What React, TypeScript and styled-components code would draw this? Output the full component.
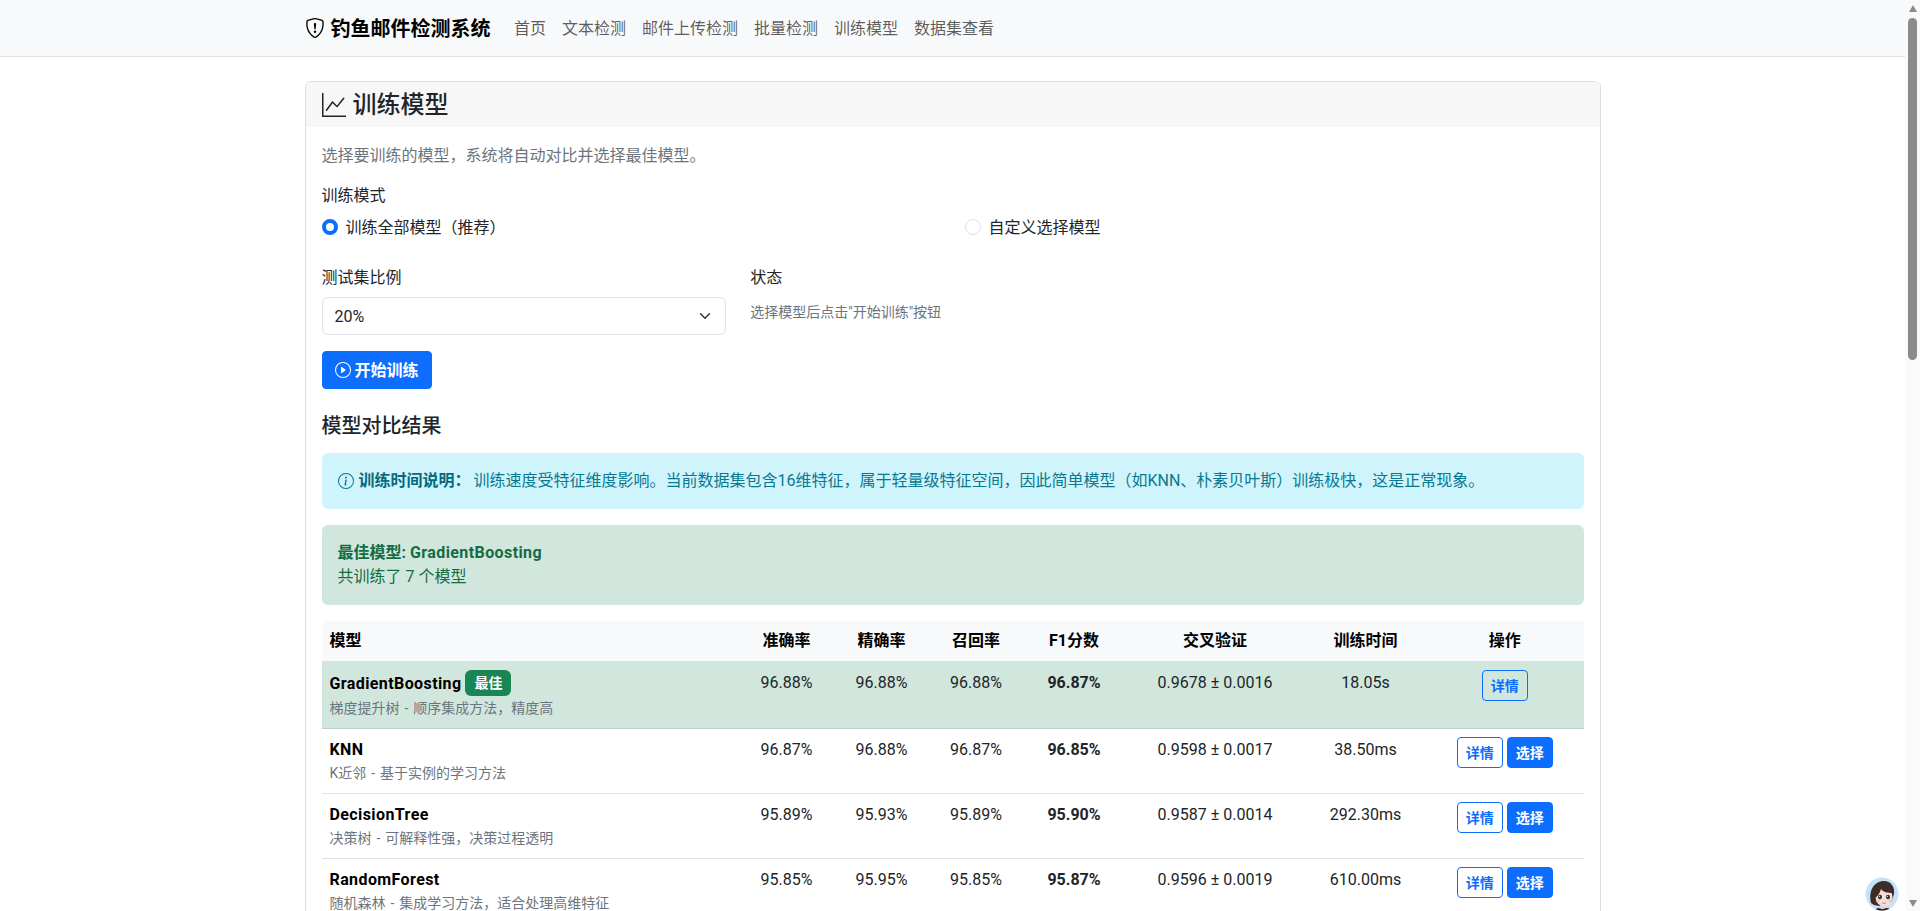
import React from "react";
import styled, { createGlobalStyle, css } from "styled-components";
import { BsShieldExclamation, BsGraphUp, BsPlayCircle, BsInfoCircle } from "react-icons/bs";

const GlobalStyle = createGlobalStyle`
  * { box-sizing: border-box; }
  html, body { margin: 0; padding: 0; height: 100%; overflow: hidden; }
  body {
    font-family: Roboto, "Noto Sans CJK SC", "Noto Sans", sans-serif;
    font-size: 16px;
    line-height: 24px;
    color: #212529;
    background: #fff;
  }
`;

/* CJK text sits one pixel lower in its 24px line box in the reference */
const loweredLine = css`
  display: block;
  height: 24px;
  line-height: 26px;
`;

const Shell = styled.div`
  display: flex;
  height: 911px;
  overflow: hidden;
`;
const Viewport = styled.div`
  position: relative;
  flex: 1;
  min-width: 0;
  overflow: hidden;
`;
const ScrollRail = styled.div`
  width: 15px;
  flex: none;
  background: #fafafa;
  display: flex;
  flex-direction: column;
  align-items: center;
  padding-top: 5px;
`;
const ArrowUp = styled.div`
  width: 0;
  height: 0;
  border-left: 4.5px solid transparent;
  border-right: 4.5px solid transparent;
  border-bottom: 7px solid #8b8b8b;
`;
const ArrowDown = styled.div`
  width: 0;
  height: 0;
  margin-top: 540px;
  border-left: 4.5px solid transparent;
  border-right: 4.5px solid transparent;
  border-top: 7px solid #8b8b8b;
`;
const Thumb = styled.div`
  width: 9px;
  height: 342px;
  margin-top: 6px;
  border-radius: 4.5px;
  background: #8b8b8b;
`;

const NavBar = styled.nav`
  height: 57px;
  background: #f8f9fa;
  border-bottom: 1px solid #dee2e6;
`;
const NavInner = styled.div`
  width: 1296px;
  margin: 0 auto;
  height: 56px;
  display: flex;
  align-items: center;
`;
const Brand = styled.div`
  display: flex;
  align-items: center;
  gap: 6px;
  font-size: 20px;
  font-weight: 700;
  color: #000;
  margin-right: 15.5px;
`;
const BrandText = styled.span`
  display: block;
  height: 28px;
  line-height: 30px;
`;
const NavLink = styled.a`
  ${loweredLine}
  padding: 0 8px;
  color: rgba(0, 0, 0, 0.65);
  white-space: nowrap;
`;

const Container = styled.main`
  width: 1296px;
  margin: 24px auto 0;
`;
const Card = styled.section`
  border: 1px solid rgba(0, 0, 0, 0.125);
  border-radius: 6px;
  overflow: hidden;
`;
const CardHeader = styled.header`
  height: 45px;
  padding: 0 16px;
  background: #f7f7f7;
  display: flex;
  align-items: center;
  gap: 7px;
  font-size: 24px;
  font-weight: 500;
`;
const CardTitle = styled.span`
  display: block;
  height: 29px;
  line-height: 31px;
`;
const CardBody = styled.div`
  padding: 16px;
`;
const Lead = styled.p`
  ${loweredLine}
  margin: 0 0 16px;
  color: #6c757d;
`;
const FieldLabel = styled.div`
  ${loweredLine}
  margin-bottom: 8px;
`;
const ModeRow = styled.div`
  display: grid;
  grid-template-columns: 643px 1fr;
  margin-bottom: 26px;
`;
const RadioItem = styled.label`
  display: flex;
  align-items: center;
  gap: 8px;
`;
const RadioText = styled.span`
  ${loweredLine}
`;
const RadioMark = styled.span<{ $on?: boolean }>`
  width: 16px;
  height: 16px;
  border-radius: 50%;
  flex: none;
  border: ${(p) => (p.$on ? "4px solid #0d6efd" : "1px solid #dee2e6")};
  background: #fff;
`;
const SettingsRow = styled.div`
  display: grid;
  grid-template-columns: 404.67px 1fr;
  column-gap: 24px;
  margin-bottom: 16px;
`;
const SelectBox = styled.select`
  display: block;
  width: 100%;
  height: 38px;
  padding: 7px 36px 5px 12px;
  appearance: none;
  font: inherit;
  color: #212529;
  background: #fff url("data:image/svg+xml,%3csvg xmlns='http://www.w3.org/2000/svg' viewBox='0 0 16 16'%3e%3cpath fill='none' stroke='%23343a40' stroke-linecap='round' stroke-linejoin='round' stroke-width='2' d='m2 5 6 6 6-6'/%3e%3c/svg%3e") no-repeat right 12px center / 16px 12px;
  border: 1px solid #dee2e6;
  border-radius: 6px;
`;
const StatusText = styled.div`
  font-size: 14px;
  line-height: 21px;
  color: #6c757d;
  padding-top: 5px;
`;
const PrimaryButton = styled.button`
  display: flex;
  align-items: center;
  gap: 4px;
  height: 38px;
  padding: 0 12px;
  border: 1px solid #0d6efd;
  border-radius: 4px;
  background: #0d6efd;
  color: #fff;
  font: inherit;
  font-weight: 700;
`;
const ButtonLabel = styled.span`
  ${loweredLine}
`;
const SectionTitle = styled.h5`
  margin: 25px 0 15px;
  font-size: 20px;
  line-height: 24px;
  font-weight: 500;
`;
const Alert = styled.div<{ $tone: "info" | "success" }>`
  margin-bottom: 16px;
  padding: 16px;
  border-radius: 6px;
  background: ${(p) => (p.$tone === "info" ? "#cff4fc" : "#d1e7dd")};
  color: ${(p) => (p.$tone === "info" ? "#087990" : "#146c43")};
`;
const AlertLine = styled.div`
  display: flex;
  align-items: center;
  white-space: pre;
`;
const InfoIcon = styled(BsInfoCircle)`
  margin-right: 5px;
`;
const AlertLead = styled.strong`
  margin-right: 3px;
  color: #06697e;
`;
const LatinBold = styled.span`
  letter-spacing: 0.4px;
`;

const Table = styled.table`
  width: 100%;
  border-collapse: collapse;
  table-layout: fixed;
`;
const HeadCell = styled.th<{ $left?: boolean }>`
  height: 40px;
  padding: 8px;
  background: #f8f9fa;
  color: #000;
  font-weight: 700;
  text-align: ${(p) => (p.$left ? "left" : "center")};
  border-bottom: 1px solid #d1e7dd;
`;
const Row = styled.tr<{ $best?: boolean }>`
  background: ${(p) => (p.$best ? "#d1e7dd" : "#fff")};
  border-bottom: 1px solid ${(p) => (p.$best ? "#bdd0c7" : "#dee2e6")};
`;
const Cell = styled.td<{ $strong?: boolean }>`
  padding: 9px 8px 7px;
  vertical-align: top;
  text-align: center;
  font-weight: ${(p) => (p.$strong ? 700 : 400)};
`;
const ActionCell = styled.td`
  padding: 8px;
  vertical-align: top;
`;
const ModelCell = styled.td`
  padding: 8px;
  vertical-align: top;
`;
const ModelName = styled.div`
  display: flex;
  align-items: center;
  gap: 4px;
  font-weight: 700;
  color: #000;
`;
const NameText = styled.span`
  ${loweredLine}
  letter-spacing: 0.4px;
`;
const Badge = styled.span`
  height: 26px;
  padding: 0 9px;
  border-radius: 6px;
  background: #198754;
  color: #fff;
  font-size: 14px;
  line-height: 26px;
  font-weight: 700;
`;
const ModelDesc = styled.div`
  font-size: 14px;
  line-height: 24px;
  word-spacing: 1.5px;
  color: #6c757d;
`;
const Actions = styled.div`
  display: flex;
  justify-content: center;
  gap: 4px;
`;
const SmallButton = styled.button<{ $solid?: boolean }>`
  width: 46px;
  height: 31px;
  padding: 0;
  border: 1px solid #0d6efd;
  border-radius: 4px;
  background: ${(p) => (p.$solid ? "#0d6efd" : "transparent")};
  color: ${(p) => (p.$solid ? "#fff" : "#0d6efd")};
  font: inherit;
  font-size: 14px;
  font-weight: 700;
`;
const AvatarBadge = styled.div`
  position: absolute;
  right: 5px;
  bottom: -1px;
  width: 36px;
  height: 36px;
`;

const columnWidths = [417.5, 95, 95, 94, 102, 180, 121, 157.5];
const headers = ["模型", "准确率", "精确率", "召回率", "F1分数", "交叉验证", "训练时间", "操作"];
const links = ["首页", "文本检测", "邮件上传检测", "批量检测", "训练模型", "数据集查看"];

const rows = [
  { name: "GradientBoosting", desc: "梯度提升树 - 顺序集成方法，精度高", acc: "96.88%", pre: "96.88%", rec: "96.88%", f1: "96.87%", cv: "0.9678 ± 0.0016", time: "18.05s", best: true },
  { name: "KNN", desc: "K近邻 - 基于实例的学习方法", acc: "96.87%", pre: "96.88%", rec: "96.87%", f1: "96.85%", cv: "0.9598 ± 0.0017", time: "38.50ms" },
  { name: "DecisionTree", desc: "决策树 - 可解释性强，决策过程透明", acc: "95.89%", pre: "95.93%", rec: "95.89%", f1: "95.90%", cv: "0.9587 ± 0.0014", time: "292.30ms" },
  { name: "RandomForest", desc: "随机森林 - 集成学习方法，适合处理高维特征", acc: "95.85%", pre: "95.95%", rec: "95.85%", f1: "95.87%", cv: "0.9596 ± 0.0019", time: "610.00ms" },
];

function Avatar() {
  return (
    <svg width="36" height="36" viewBox="0 0 36 36">
      <defs>
        <clipPath id="avatarClip"><circle cx="18" cy="18" r="16.5" /></clipPath>
      </defs>
      <circle cx="18" cy="18" r="18" fill="#fff" />
      <g clipPath="url(#avatarClip)">
        <rect width="36" height="36" fill="#c5e2fc" />
        <path d="M7 27C4 15 10 5 20 5c7 0 11 6 10 13l-2 6-13 6-5-1z" fill="#3f2c26" />
        <path d="M14 31h9v5h-9z" fill="#eec8bd" />
        <ellipse cx="20" cy="21" rx="8.5" ry="9.5" fill="#f5dcd4" />
        <path d="M11 22c0-9 4-13 10-13 5 0 8 3 8 8-6 0-10-1-12-4-1 4-3 7-6 9z" fill="#3f2c26" />
        <ellipse cx="16" cy="21" rx="2" ry="2.3" fill="#2f2f33" />
        <ellipse cx="24" cy="21" rx="2" ry="2.3" fill="#2f2f33" />
        <circle cx="15.5" cy="20.3" r="0.6" fill="#fff" />
        <circle cx="23.5" cy="20.3" r="0.6" fill="#fff" />
        <ellipse cx="14" cy="25" rx="2" ry="1.2" fill="#f3bdb4" />
        <ellipse cx="26.5" cy="25" rx="2" ry="1.2" fill="#f3bdb4" />
        <path d="M18.5 27c1 .6 2 .6 3 0" stroke="#c4615f" strokeWidth="1" fill="none" />
        <path d="M9 37c1-4 5-5 6-5 1 1.5 6 1.5 7 0 2 0 6 1 7 5z" fill="#1d1a1c" />
      </g>
    </svg>
  );
}

export default function App() {
  return (
    <>
      <GlobalStyle />
      <Shell>
        <Viewport>
          <NavBar>
            <NavInner>
              <Brand>
                <BsShieldExclamation size={20} />
                <BrandText>钓鱼邮件检测系统</BrandText>
              </Brand>
              {links.map((l) => (
                <NavLink key={l}>{l}</NavLink>
              ))}
            </NavInner>
          </NavBar>
          <Container>
            <Card>
              <CardHeader>
                <BsGraphUp size={24} />
                <CardTitle>训练模型</CardTitle>
              </CardHeader>
              <CardBody>
                <Lead>选择要训练的模型，系统将自动对比并选择最佳模型。</Lead>
                <FieldLabel>训练模式</FieldLabel>
                <ModeRow>
                  <RadioItem>
                    <RadioMark $on />
                    <RadioText>训练全部模型（推荐）</RadioText>
                  </RadioItem>
                  <RadioItem>
                    <RadioMark />
                    <RadioText>自定义选择模型</RadioText>
                  </RadioItem>
                </ModeRow>
                <SettingsRow>
                  <div>
                    <FieldLabel>测试集比例</FieldLabel>
                    <SelectBox defaultValue="20%">
                      <option>10%</option>
                      <option>20%</option>
                      <option>30%</option>
                    </SelectBox>
                  </div>
                  <div>
                    <FieldLabel>状态</FieldLabel>
                    <StatusText>选择模型后点击"开始训练"按钮</StatusText>
                  </div>
                </SettingsRow>
                <PrimaryButton>
                  <BsPlayCircle size={16} />
                  <ButtonLabel>开始训练</ButtonLabel>
                </PrimaryButton>
                <SectionTitle>模型对比结果</SectionTitle>
                <Alert $tone="info">
                  <AlertLine>
                    <InfoIcon size={16} />
                    <AlertLead>训练时间说明：</AlertLead>
                    训练速度受特征维度影响。当前数据集包含16维特征，属于轻量级特征空间，因此简单模型（如KNN、朴素贝叶斯）训练极快，这是正常现象。
                  </AlertLine>
                </Alert>
                <Alert $tone="success">
                  <strong>最佳模型: <LatinBold>GradientBoosting</LatinBold></strong>
                  <div>共训练了 7 个模型</div>
                </Alert>
                <Table>
                  <colgroup>
                    {columnWidths.map((w, i) => (
                      <col key={i} width={w} />
                    ))}
                  </colgroup>
                  <thead>
                    <tr>
                      {headers.map((h, i) => (
                        <HeadCell key={h} $left={i === 0}>{h}</HeadCell>
                      ))}
                    </tr>
                  </thead>
                  <tbody>
                    {rows.map((r) => (
                      <Row key={r.name} $best={r.best}>
                        <ModelCell>
                          <ModelName>
                            <NameText>{r.name}</NameText>
                            {r.best && <Badge>最佳</Badge>}
                          </ModelName>
                          <ModelDesc>{r.desc}</ModelDesc>
                        </ModelCell>
                        <Cell>{r.acc}</Cell>
                        <Cell>{r.pre}</Cell>
                        <Cell>{r.rec}</Cell>
                        <Cell $strong>{r.f1}</Cell>
                        <Cell>{r.cv}</Cell>
                        <Cell>{r.time}</Cell>
                        <ActionCell>
                          <Actions>
                            <SmallButton>详情</SmallButton>
                            {!r.best && <SmallButton $solid>选择</SmallButton>}
                          </Actions>
                        </ActionCell>
                      </Row>
                    ))}
                  </tbody>
                </Table>
              </CardBody>
            </Card>
          </Container>
          <AvatarBadge>
            <Avatar />
          </AvatarBadge>
        </Viewport>
        <ScrollRail>
          <ArrowUp />
          <Thumb />
          <ArrowDown />
        </ScrollRail>
      </Shell>
    </>
  );
}
